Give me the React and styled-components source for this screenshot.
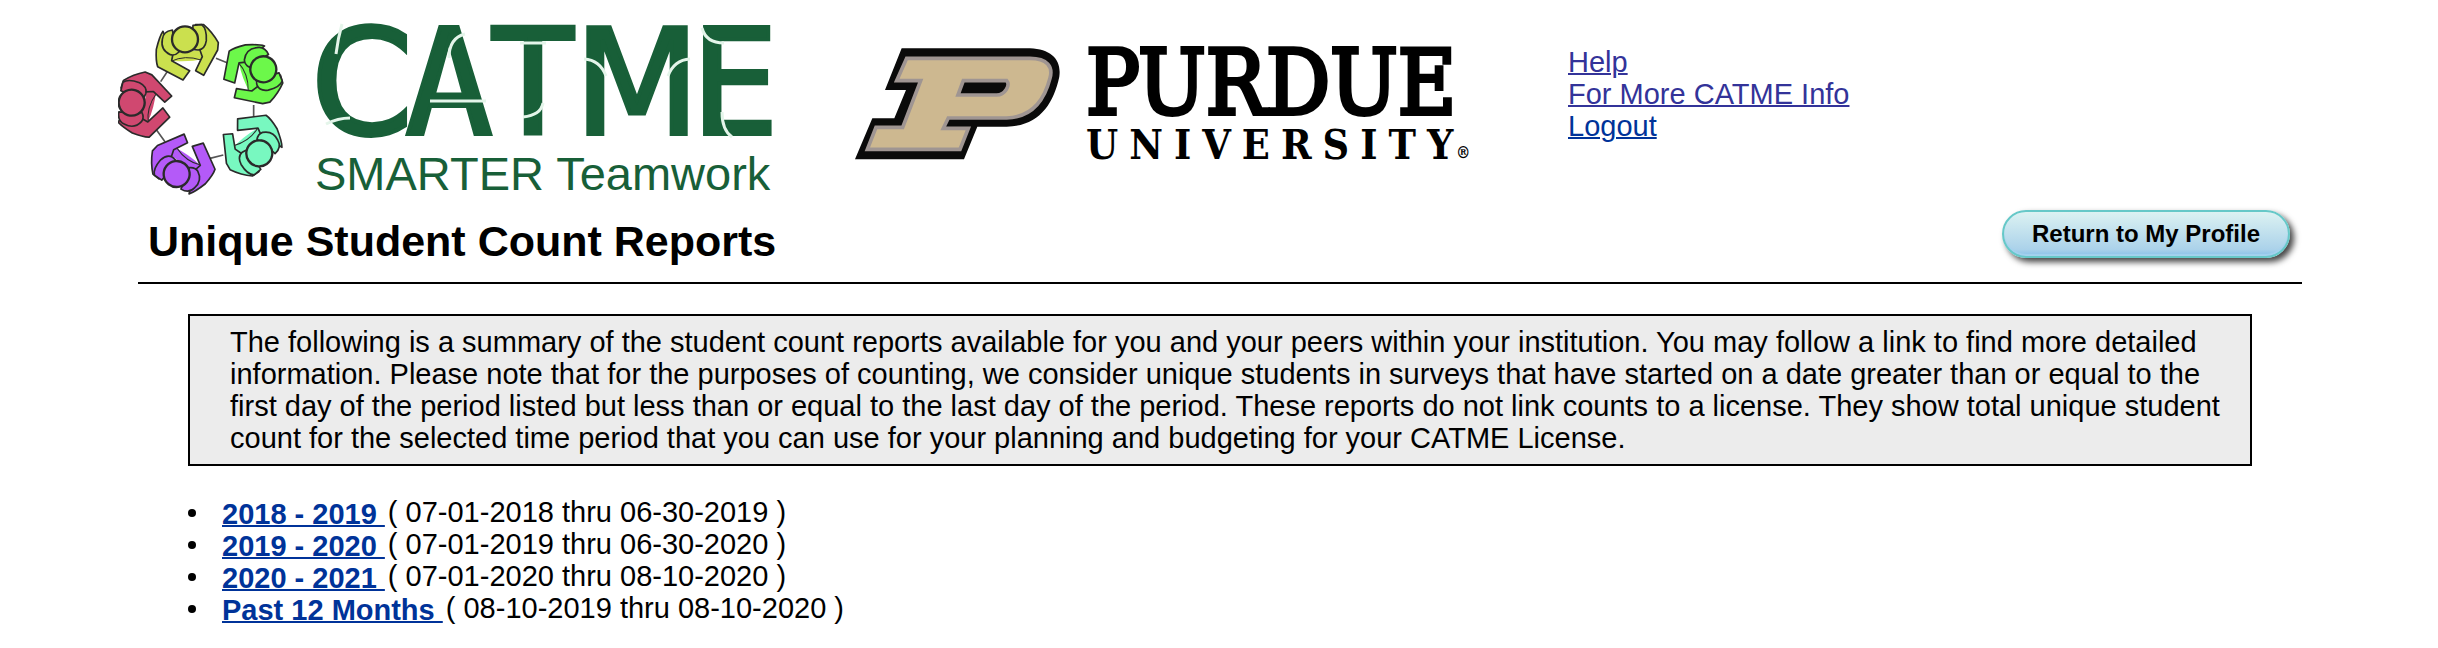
import React from "react";
import styled, { createGlobalStyle } from "styled-components";

const GlobalStyle = createGlobalStyle`
  body {
    margin: 0;
    background: #fff;
    color: #000;
    font: 29px/32px "Liberation Sans", Arial, Helvetica, sans-serif;
  }
`;

const Header = styled.header`
  display: flex;
  align-items: flex-start;
  height: 200px;
  padding-left: 118px;
`;

const Logo = styled.svg`
  flex: none;
  display: block;
  margin-right: ${(p) => p.$gap}px;
`;

const LetterSans = styled.tspan`
  font-family: "DejaVu Sans", sans-serif;
`;

const LetterMono = styled.tspan`
  font-family: "DejaVu Sans Mono", monospace;
`;

const QuickLinks = styled.nav`
  display: flex;
  flex-direction: column;
  align-items: flex-start;
  padding-top: 46px;
  white-space: nowrap;
`;

const QuickLink = styled.a`
  color: ${(p) => (p.$visited ? "#339" : "#039")};
  text-decoration-thickness: 2px;
`;

const Page = styled.main`
  padding: 0 136px 24px 138px;
`;

const TitleRow = styled.div`
  display: flex;
  align-items: flex-start;
  justify-content: space-between;
  padding: 10px 12px 10px 10px;
  border-bottom: 2px solid #000;
`;

const Title = styled.h1`
  margin: 0;
  font-size: 43px;
  line-height: 62px;
`;

const ProfileButton = styled.button`
  height: 48px;
  padding: 0 28px;
  border: 2px solid #66c8c8;
  border-radius: 24px;
  background: linear-gradient(#dcf2f2 0%, #abd2ea 85%, #86bfe8 100%);
  box-shadow: 4px 4px 6px #444, inset 0 -2px 1px #a4d2ee;
  color: #000;
  font: bold 24px/40px "Liberation Sans", Arial, Helvetica, sans-serif;
`;

const Notice = styled.p`
  margin: 30px 50px;
  padding: 10px 24px 10px 40px;
  border: 2px solid #000;
  background: #ececec;
`;

const ReportList = styled.ul`
  margin: 0 50px;
  padding: 0;
  list-style: none;
`;

const ReportItem = styled.li`
  height: 32px;
  white-space: pre;

  &::before {
    content: "";
    display: inline-block;
    width: 8px;
    height: 8px;
    margin-right: 26px;
    border-radius: 50%;
    background: #000;
    vertical-align: 5px;
  }
`;

const ReportLink = styled.a`
  margin-right: 3px;
  color: #039;
  font-weight: bold;
  text-decoration-thickness: 2px;
  vertical-align: -2px;
`;

const teammates = [
  { x: 255, y: 118, turn: 0, color: "#cbe04e" },
  { x: 490, y: 208, turn: 73, color: "#6cf84a" },
  { x: 478, y: 460, turn: 145, color: "#78f8c0" },
  { x: 230, y: 522, turn: 218, color: "#b45af8" },
  { x: 95, y: 308, turn: 288, color: "#d04870" },
];

function Teammate({ x, y, turn, color }) {
  return (
    <g
      transform={`translate(${x} ${y}) rotate(${turn})`}
      fill={color}
      stroke="#2a2a2a"
      strokeWidth="5"
      strokeLinejoin="round"
    >
      <path d="M-40 64 Q5 70 60 58 L56 30 Q10 40 -46 34 Z" stroke="none" />
      <path d="M-42 66 Q0 46 48 62" fill="none" strokeWidth="3" />
      <path d="M-66 -24 Q-76 -10 -86 30 Q-88 66 -82 82 L-6 122 L14 94 L-40 64 L-36 44 Z" />
      <path d="M32 -44 L56 -44 Q82 -22 100 10 L98 32 L56 108 L32 94 L52 52 L44 30 Z" />
      <path d="M-38 -28 Q-66 -24 -68 0 Q-74 32 -44 46 Q-30 50 -18 38 L-30 10 Z" />
      <path d="M24 -42 L50 -44 Q66 -32 64 4 Q60 30 40 32 L20 30 Z" />
      <circle r="39" strokeWidth="7" />
    </g>
  );
}

function CatmeLogo() {
  return (
    <Logo $gap={76} width="660" height="200" viewBox="118 0 660 200" role="img" aria-label="CATME SMARTER Teamwork">
      <g transform="translate(100 0) scale(0.3333)">
        <path
          d="M348 175 L385 190 M461 315 V355 M370 465 L330 475 M195 425 L168 388 M182 245 L205 210"
          stroke="#555"
          strokeWidth="5"
        />
        {teammates.map((t) => (
          <Teammate key={t.color} {...t} />
        ))}
      </g>
      <text y="134" fill="#185f38" stroke="#185f38" strokeWidth="4" fontSize="146" textAnchor="middle">
        <LetterSans x="362">C</LetterSans>
        <LetterMono x="449">A</LetterMono>
        <LetterMono x="533">T</LetterMono>
        <LetterSans x="637">M</LetterSans>
        <LetterMono x="735">E</LetterMono>
      </text>
      <g fill="none" stroke="#e4f5ea" strokeWidth="3">
        <path d="M342 24 Q338 38 336 54 M326 124 Q338 118 350 118" />
        <path d="M465 34 Q449 38 449 58 M430 101 H486" />
        <path d="M520 43 H546 M523 117 Q541 115 543 103" />
        <path d="M584 59 Q600 60 606 76 M690 59 Q674 60 668 76" />
        <path d="M702 28 Q706 43 724 43 M722 112 Q722 130 732 137" />
      </g>
      <text x="315" y="190" fill="#185f38" fontFamily="'Liberation Sans', Arial, sans-serif" fontSize="47">
        SMARTER Teamwork
      </text>
    </Logo>
  );
}

function PurdueLogo() {
  return (
    <Logo $gap={88} width="626" height="200" viewBox="854 0 626 200" role="img" aria-label="Purdue University">
      <g transform="translate(840 30) scale(0.3333)">
        <path
          d="M185 55 H570 C635 58 665 90 658 140 C640 225 595 288 500 290 H412 L372 388 H45 L97 265 H163 L198 180 H135 Z"
          fill="#0a0a0a"
        />
        <path
          d="M200 85 H570 C622 85 640 110 630 145 C612 215 575 262 500 264 H325 L310 295 H385 L360 358 H82 L108 292 H188 L242 152 H170 Z"
          fill="#cdb890"
          stroke="#9f9592"
          strokeWidth="11"
        />
        <path d="M370 152 H500 C512 165 495 195 470 195 H354 Z" fill="#0a0a0a" stroke="#9f9592" strokeWidth="11" />
      </g>
      <g fontFamily="'DejaVu Serif Condensed', 'DejaVu Serif', serif">
        <text x="1086" y="114" fontSize="89" stroke="#000" strokeWidth="4">
          PURDUE
        </text>
        <text x="1086" y="159" fontSize="41" fontWeight="bold" letterSpacing="11">
          UNIVERSITY
        </text>
        <text x="1456" y="158" fontSize="16" fontWeight="bold">
          ®
        </text>
      </g>
    </Logo>
  );
}

const reports = [
  { name: "2018 - 2019", range: "( 07-01-2018 thru 06-30-2019 )" },
  { name: "2019 - 2020", range: "( 07-01-2019 thru 06-30-2020 )" },
  { name: "2020 - 2021", range: "( 07-01-2020 thru 08-10-2020 )" },
  { name: "Past 12 Months", range: "( 08-10-2019 thru 08-10-2020 )" },
];

export default function App() {
  return (
    <>
      <GlobalStyle />
      <Header>
        <CatmeLogo />
        <PurdueLogo />
        <QuickLinks>
          <QuickLink href="#help" $visited>Help</QuickLink>
          <QuickLink href="#info" $visited>For More CATME Info</QuickLink>
          <QuickLink href="#logout">Logout</QuickLink>
        </QuickLinks>
      </Header>
      <Page>
        <TitleRow>
          <Title>Unique Student Count Reports</Title>
          <ProfileButton type="button">Return to My Profile</ProfileButton>
        </TitleRow>
        <Notice>
          The following is a summary of the student count reports available for you and your peers
          within your institution. You may follow a link to find more detailed information. Please
          note that for the purposes of counting, we consider unique students in surveys that have
          started on a date greater than or equal to the first day of the period listed but less
          than or equal to the last day of the period. These reports do not link counts to a
          license. They show total unique student count for the selected time period that you can
          use for your planning and budgeting for your CATME License.
        </Notice>
        <ReportList>
          {reports.map((r) => (
            <ReportItem key={r.name}>
              <ReportLink href="#report">{r.name + " "}</ReportLink>
              {r.range}
            </ReportItem>
          ))}
        </ReportList>
      </Page>
    </>
  );
}
